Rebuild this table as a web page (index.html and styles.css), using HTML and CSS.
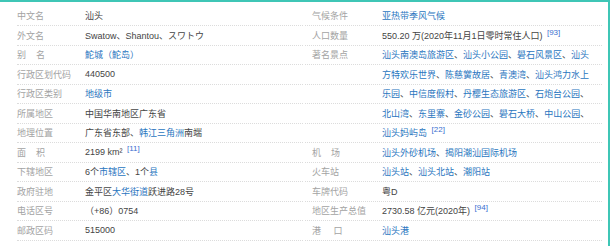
FILE: index.html
```html
<!DOCTYPE html>
<html lang="zh">
<head>
<meta charset="utf-8">
<link rel="stylesheet" href="styles.css">
</head>
<body>
<div class="card">
  <dl class="col col-left">
    <div class="row"><dt>中文名</dt><dd>汕头</dd></div>
    <div class="row"><dt>外文名</dt><dd>Swatow、Shantou、スワトウ</dd></div>
    <div class="row"><dt>别&nbsp;&nbsp;&nbsp;&nbsp;名</dt><dd><a>鮀城（鮀岛）</a></dd></div>
    <div class="row"><dt>行政区划代码</dt><dd>440500</dd></div>
    <div class="row"><dt>行政区类别</dt><dd><a>地级市</a></dd></div>
    <div class="row"><dt>所属地区</dt><dd>中国华南地区广东省</dd></div>
    <div class="row"><dt>地理位置</dt><dd>广东省东部、<a>韩江三角洲</a>南端</dd></div>
    <div class="row"><dt>面&nbsp;&nbsp;&nbsp;&nbsp;积</dt><dd>2199 km² <sup>[11]</sup></dd></div>
    <div class="row"><dt>下辖地区</dt><dd>6个<a>市辖区</a>、1个<a>县</a></dd></div>
    <div class="row"><dt>政府驻地</dt><dd>金平区<a>大华街道</a>跃进路28号</dd></div>
    <div class="row"><dt>电话区号</dt><dd>（+86）0754</dd></div>
    <div class="row"><dt>邮政区码</dt><dd>515000</dd></div>
  </dl>
  <dl class="col col-right">
    <div class="row"><dt>气候条件</dt><dd><a>亚热带季风气候</a></dd></div>
    <div class="row"><dt>人口数量</dt><dd>550.20 万(2020年11月1日零时常住人口) <sup>[93]</sup></dd></div>
    <div class="row"><dt>著名景点</dt><dd><a>汕头南澳岛旅游区</a>、<a>汕头小公园</a>、<a>礐石风景区</a>、<a>汕头</a></dd></div>
    <div class="row"><dt></dt><dd><a>方特欢乐世界</a>、<a>陈慈黉故居</a>、<a>青澳湾</a>、<a>汕头鸿力水上</a></dd></div>
    <div class="row"><dt></dt><dd><a>乐园</a>、<a>中信度假村</a>、<a>丹樱生态旅游区</a>、<a>石炮台公园</a>、</dd></div>
    <div class="row"><dt></dt><dd><a>北山湾</a>、<a>东里寨</a>、<a>金砂公园</a>、<a>礐石大桥</a>、<a>中山公园</a>、</dd></div>
    <div class="row"><dt></dt><dd><a>汕头妈屿岛</a> <sup>[22]</sup></dd></div>
    <div class="row"><dt>机&nbsp;&nbsp;&nbsp;&nbsp;场</dt><dd><a>汕头外砂机场</a>、<a>揭阳潮汕国际机场</a></dd></div>
    <div class="row"><dt>火车站</dt><dd><a>汕头站</a>、<a>汕头北站</a>、<a>潮阳站</a></dd></div>
    <div class="row"><dt>车牌代码</dt><dd>粤D</dd></div>
    <div class="row"><dt>地区生产总值</dt><dd>2730.58 亿元(2020年) <sup>[94]</sup></dd></div>
    <div class="row"><dt>港&nbsp;&nbsp;&nbsp;&nbsp;&nbsp;口</dt><dd><a>汕头港</a></dd></div>
  </dl>
</div>
</body>
</html>
```
FILE: styles.css
```css
html, body {
  margin: 0;
  padding: 0;
  background: #ffffff;
}

.card {
  width: 610px;
  height: 246px;
  box-sizing: border-box;
  border-top: 2px solid #3fc6b6;
  border-right: 2px solid #3fc6b6;
  padding: 4.5px 6px 0 17px;
  display: grid;
  grid-template-columns: 286px 297px;
  column-gap: 2px;
  font-family: "Liberation Sans", Arial, "Noto Sans CJK SC", sans-serif;
  font-size: 9px;
  color: #444444;
}

.col {
  margin: 0;
  display: flex;
  flex-direction: column;
}

.row {
  display: flex;
  align-items: center;
  height: 19.5px;
  box-sizing: border-box;
  border-bottom: 1px dotted #dcdcdc;
  white-space: nowrap;
}

dt {
  flex: none;
  color: #a3a3a3;
}

dd {
  margin: 0;
  color: #444444;
}

.col-left dt {
  width: 68px;
}

.col-right dt {
  width: 70px;
  padding-left: 7px;
}

a {
  color: #2a76c0;
  text-decoration: none;
}

sup {
  color: #3a6fd0;
  font-size: 8px;
  vertical-align: 4px;
  line-height: 0;
  margin-left: 2px;
}
```
